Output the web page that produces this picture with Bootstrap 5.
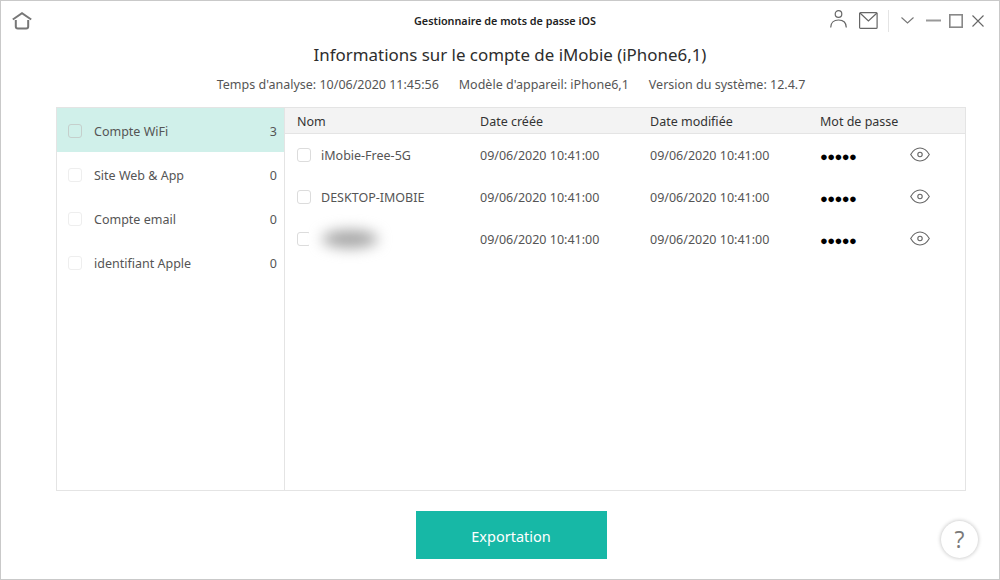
<!DOCTYPE html>
<html lang="fr">
<head>
    <meta charset="UTF-8">
    <title>Gestionnaire de mots de passe iOS</title>
    <link rel="stylesheet" href="https://cdn.jsdelivr.net/npm/bootstrap@5.3.0/dist/css/bootstrap.min.css">
    <style>
        html, body { height: 100%; }
        body {
            font-family: "Noto Sans", "Open Sans", "Liberation Sans", sans-serif;
            font-size: 12.5px;
            color: #4a4a4a;
            background: #fff;
        }
        .app-window {
            width: 1000px;
            height: 580px;
            border: 1px solid #c9c9c9;
            overflow: hidden;
        }
        .top-bar { height: 39px; padding: 0 0 0 11px; }
        .app-title { font-size: 10.8px; font-weight: 600; color: #222; width: 300px; margin-left: 323px; padding-top: 2px; text-align: center; }
        .top-icons { margin-left: auto; padding-right: 15px; }
        .user-ico { margin-right: 12px; margin-top: -3px; }
        .sep-line { width: 1px; height: 22px; background: #e4e4e4; margin: 0 12px 0 10px; }
        .min-ico { margin-left: 12px; }
        .max-ico { margin-left: 8px; }
        .close-ico { margin-left: 9px; }
        .page-title { font-size: 16.9px; color: #2d2d2d; height: 30px; line-height: 30px; padding-left: 20px; }
        .scan-info { height: 37px; line-height: 30px; gap: 20px; color: #555; padding-left: 22px; }
        .data-panel { height: 384px; margin: 0 33px 0 55px; border: 1px solid #e4e4e4; }
        .side-col { width: 228px; border-right: 1px solid #e4e4e4; }
        .side-row { height: 44px; padding: 0 7px 0 11px; color: #555; }
        .side-row.is-active { background: #d0f0ea; }
        .tick-box { width: 14px; height: 14px; border: 1px solid #dcdcdc; border-radius: 3px; background: #fff; flex: none; }
        .side-row .tick-box { margin-right: 12px; margin-top: 2px; border-color: #eee; }
        .side-row.is-active .tick-box { background: #d0f0ea; border-color: #c5cfcc; }
        .main-col { flex: 1; }
        .head-row { height: 26px; background: #f3f3f3; border-bottom: 1px solid #e4e4e4; color: #333; }
        .body-row { height: 42px; color: #555; }
        .body-text { padding-top: 2px; }
        .cell-name { width: 191px; padding-left: 12px; }
        .cell-date { width: 170px; }
        .cell-pass { width: 94px; }
        .name-text { margin-left: 10px; }
        .dots { color: #000; font-size: 13px; letter-spacing: -0.6px; line-height: 1; padding-top: 3px; font-family: "Liberation Sans", sans-serif; }
        .eye-icon { margin-top: -1px; }
        .smear { position: absolute; left: 24px; top: 0; width: 110px; height: 42px; background: #fff; }
        .smear-core { position: absolute; left: 37px; top: 12px; width: 56px; height: 18px; border-radius: 50%; background: #a5a5a5; filter: blur(7px); }
        .bottom-bar { height: 88px; padding-left: 22px; }
        .export-btn { width: 191px; height: 48px; margin-top: 20px; padding-top: 10px; background: #17b8a6; border: 0; border-radius: 0; color: #fff; font-size: 14.5px; }
        .export-btn:hover { background: #17b8a6; color: #fff; }
        .help-btn { position: absolute; left: 940px; top: 520px; width: 37px; height: 37px; border-radius: 50%; background: #fff; box-shadow: 0 0 4px rgba(0,0,0,.28); color: #7a7a7a; font-family: "Open Sans", sans-serif; font-size: 23px; line-height: 37px; text-align: center; }
    </style>
</head>
<body>
    <div class="app-window position-relative d-flex flex-column">
        <div class="top-bar d-flex align-items-center">
            <svg width="20" height="18" viewBox="0 0 20 18" fill="none" stroke="#777" stroke-width="2"><path d="M.8 7.500 10 1.200l9.200 6.300"/><path d="M3.800 8v6.500q0 2 2 2h8.400q2 0 2-2V8"/></svg>
            <div class="app-title">Gestionnaire de mots de passe iOS</div>
            <div class="top-icons d-flex align-items-center">
                <svg class="user-ico" width="17" height="18" viewBox="0 0 17 18" fill="none" stroke="#666" stroke-width="1.200"><circle cx="8.500" cy="4" r="3.300"/><path d="M.7 17.500c0-5 3.300-7.500 7.800-7.500s7.800 2.500 7.800 7.500"/></svg>
                <svg width="19" height="17" viewBox="0 0 19 17" fill="none" stroke="#666" stroke-width="1.200"><rect x=".6" y=".6" width="17.500" height="15.800" rx="1"/><path d="M1 1l8.400 8L18 1"/></svg>
                <div class="sep-line"></div>
                <svg width="13" height="7" viewBox="0 0 13 7" fill="none" stroke="#777" stroke-width="1.100"><path d="M.5.500l6 5.500 6-5.500"/></svg>
                <svg class="min-ico" width="15" height="3" viewBox="0 0 15 3"><rect width="15" height="2" y=".5" fill="#999"/></svg>
                <svg class="max-ico" width="14" height="14" viewBox="0 0 14 14" fill="none" stroke="#888" stroke-width="1.600"><rect x=".8" y=".8" width="12.400" height="12.400"/></svg>
                <svg class="close-ico" width="12" height="12" viewBox="0 0 12 12" fill="none" stroke="#666" stroke-width="1.100"><path d="M.5.500l11 11M11.500.500l-11 11"/></svg>
            </div>
        </div>

        <div class="page-title text-center">Informations sur le compte de iMobie (iPhone6,1)</div>
        <div class="scan-info d-flex justify-content-center">
            <span>Temps d'analyse: 10/06/2020 11:45:56</span>
            <span>Modèle d'appareil: iPhone6,1</span>
            <span>Version du système: 12.4.7</span>
        </div>

        <div class="data-panel d-flex">
            <div class="side-col">
                <div class="side-row is-active d-flex align-items-center"><span class="tick-box"></span><span class="flex-grow-1 pt-1">Compte WiFi</span><span class="pt-1">3</span></div>
                <div class="side-row d-flex align-items-center"><span class="tick-box"></span><span class="flex-grow-1 pt-1">Site Web &amp; App</span><span class="pt-1">0</span></div>
                <div class="side-row d-flex align-items-center"><span class="tick-box"></span><span class="flex-grow-1 pt-1">Compte email</span><span class="pt-1">0</span></div>
                <div class="side-row d-flex align-items-center"><span class="tick-box"></span><span class="flex-grow-1 pt-1">identifiant Apple</span><span class="pt-1">0</span></div>
            </div>
            <div class="main-col">
                <div class="head-row d-flex align-items-center pt-1">
                    <div class="cell-name">Nom</div>
                    <div class="cell-date ps-1">Date créée</div>
                    <div class="cell-date ps-1">Date modifiée</div>
                    <div class="cell-pass ps-1">Mot de passe</div>
                </div>
                <div class="body-row d-flex align-items-center">
                    <div class="cell-name d-flex align-items-center"><span class="tick-box"></span><span class="name-text body-text">iMobie-Free-5G</span></div>
                    <div class="cell-date ps-1 body-text">09/06/2020 10:41:00</div>
                    <div class="cell-date ps-1 body-text">09/06/2020 10:41:00</div>
                    <div class="cell-pass ps-1 dots">●●●●●</div>
                    <svg class="eye-icon" width="20" height="15" viewBox="0 0 20 15" fill="none" stroke="#666" stroke-width="1.100"><path d="M.7 7.500C3 3.500 6 1 10 1s7 2.500 9.300 6.500C17 11.500 14 14 10 14S3 11.500.7 7.500z"/><circle cx="10" cy="7.500" r="2.200"/></svg>
                </div>
                <div class="body-row d-flex align-items-center">
                    <div class="cell-name d-flex align-items-center"><span class="tick-box"></span><span class="name-text body-text">DESKTOP-IMOBIE</span></div>
                    <div class="cell-date ps-1 body-text">09/06/2020 10:41:00</div>
                    <div class="cell-date ps-1 body-text">09/06/2020 10:41:00</div>
                    <div class="cell-pass ps-1 dots">●●●●●</div>
                    <svg class="eye-icon" width="20" height="15" viewBox="0 0 20 15" fill="none" stroke="#666" stroke-width="1.100"><path d="M.7 7.500C3 3.500 6 1 10 1s7 2.500 9.300 6.500C17 11.500 14 14 10 14S3 11.500.7 7.500z"/><circle cx="10" cy="7.500" r="2.200"/></svg>
                </div>
                <div class="body-row d-flex align-items-center position-relative">
                    <div class="cell-name d-flex align-items-center"><span class="tick-box"></span></div>
                    <div class="smear"></div>
                    <div class="smear-core"></div>
                    <div class="cell-date ps-1 body-text">09/06/2020 10:41:00</div>
                    <div class="cell-date ps-1 body-text">09/06/2020 10:41:00</div>
                    <div class="cell-pass ps-1 dots">●●●●●</div>
                    <svg class="eye-icon" width="20" height="15" viewBox="0 0 20 15" fill="none" stroke="#666" stroke-width="1.100"><path d="M.7 7.500C3 3.500 6 1 10 1s7 2.500 9.300 6.500C17 11.500 14 14 10 14S3 11.500.7 7.500z"/><circle cx="10" cy="7.500" r="2.200"/></svg>
                </div>
            </div>
        </div>

        <div class="bottom-bar text-center">
            <button type="button" class="btn export-btn">Exportation</button>
        </div>
        <div class="help-btn">?</div>
    </div>
    <script src="https://cdn.jsdelivr.net/npm/bootstrap@5.3.0/dist/js/bootstrap.bundle.min.js"></script>
</body>
</html>
